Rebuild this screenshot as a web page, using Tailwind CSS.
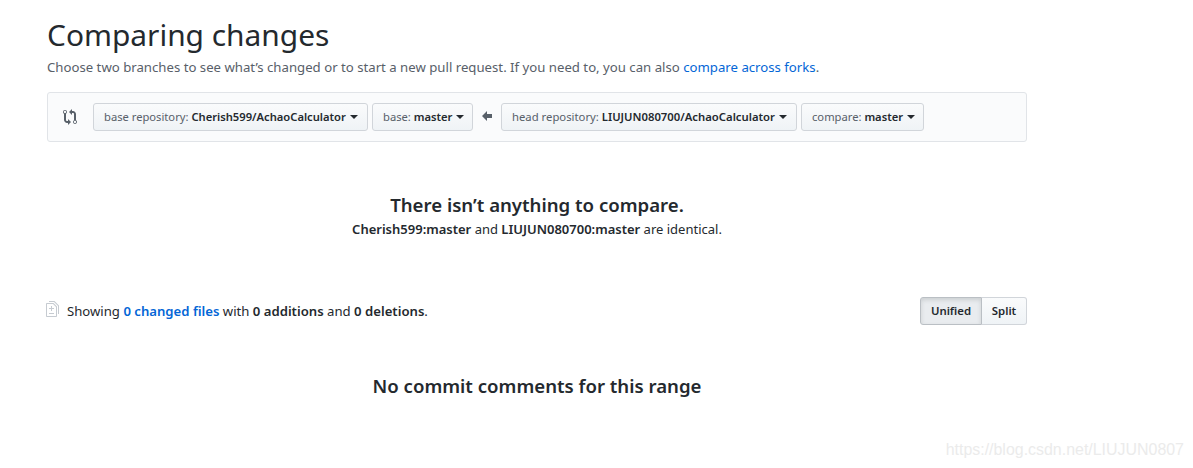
<!DOCTYPE html>
<html lang="en">
<head>
    <meta charset="UTF-8">
    <title>Comparing changes</title>
    <script src="https://cdn.jsdelivr.net/npm/@tailwindcss/browser@4"></script>
</head>
<body class="bg-white font-['Noto_Sans',sans-serif] text-[#24292e] w-[1193px] h-[468px] overflow-hidden relative">

    <div class="w-[980px] ml-[47px] pt-[16px]">
        <h1 class="text-[29.9px] leading-[38px] font-normal">Comparing changes</h1>
        <p class="text-[13.2px] leading-[20px] text-[#586069] mt-[3px]">Choose two branches to see what’s changed or to start a new pull request. If you need to, you can also <a class="text-[#0366d6]">compare across forks</a>.</p>

        <!-- range editor -->
        <div class="flex items-center h-[50px] mt-[15px] bg-[#fafbfc] border border-[#e1e4e8] rounded-[3px] pl-[15px]">
            <svg class="w-[14px] h-[16px] fill-[#586069] mr-[16px]" viewBox="0 0 14 16"><path d="M5 12H4c-.27-.02-.48-.11-.69-.31-.21-.2-.3-.42-.31-.69V4.72A1.993 1.993 0 0 0 2 1a1.993 1.993 0 0 0-1 3.72V11c.03.78.34 1.47.94 2.06.6.59 1.28.91 2.06.94h1v2l3-3-3-3v2zM2 1.8c.66 0 1.2.55 1.2 1.2 0 .65-.55 1.2-1.2 1.2C1.35 4.2.8 3.65.8 3c0-.65.55-1.2 1.2-1.2zm11 9.48V5c-.03-.78-.34-1.47-.94-2.06-.6-.59-1.28-.91-2.06-.94H9V0L6 3l3 3V4h1c.27.02.48.11.69.31.21.2.3.42.31.69v6.28A1.993 1.993 0 0 0 12 15a1.993 1.993 0 0 0 1-3.72zm-1 2.92c-.66 0-1.2-.55-1.2-1.2 0-.65.55-1.2 1.2-1.2.65 0 1.2.55 1.2 1.2 0 .65-.55 1.2-1.2 1.2z"/></svg>
            <button class="flex items-center h-[28px] w-[275px] px-[10px] text-[11.2px] text-[#586069] border border-[#d1d5da] rounded-[3px] bg-gradient-to-b from-[#fafbfc] to-[#eff3f6] whitespace-nowrap">base repository:&nbsp;<b class="font-semibold text-[#24292e]">Cherish599/AchaoCalculator</b><span class="ml-[4px] border-x-[4px] border-x-transparent border-t-[4px] border-t-[#24292e]"></span></button>
            <button class="flex items-center h-[28px] w-[101px] ml-[4px] px-[10px] text-[11.2px] text-[#586069] border border-[#d1d5da] rounded-[3px] bg-gradient-to-b from-[#fafbfc] to-[#eff3f6] whitespace-nowrap">base:&nbsp;<b class="font-semibold text-[#24292e]">master</b><span class="ml-[4px] border-x-[4px] border-x-transparent border-t-[4px] border-t-[#24292e]"></span></button>
            <svg class="w-[10px] h-[10px] fill-[#586069] mx-[9px] mb-[2px]" viewBox="0 0 10 10"><path d="M5 0 0 5l5 5V7h5V3H5z"/></svg>
            <button class="flex items-center h-[28px] w-[296px] px-[10px] text-[11.3px] text-[#586069] border border-[#d1d5da] rounded-[3px] bg-gradient-to-b from-[#fafbfc] to-[#eff3f6] whitespace-nowrap">head repository:&nbsp;<b class="font-semibold text-[#24292e]">LIUJUN080700/AchaoCalculator</b><span class="ml-[4px] border-x-[4px] border-x-transparent border-t-[4px] border-t-[#24292e]"></span></button>
            <button class="flex items-center h-[28px] w-[123px] ml-[4px] px-[10px] text-[11.2px] text-[#586069] border border-[#d1d5da] rounded-[3px] bg-gradient-to-b from-[#fafbfc] to-[#eff3f6] whitespace-nowrap">compare:&nbsp;<b class="font-semibold text-[#24292e]">master</b><span class="ml-[4px] border-x-[4px] border-x-transparent border-t-[4px] border-t-[#24292e]"></span></button>
        </div>

        <!-- blankslate -->
        <div class="text-center mt-[50px]">
            <h3 class="text-[18.6px] leading-[26px] font-semibold">There isn’t anything to compare.</h3>
            <p class="text-[13px] leading-[20px] mt-[1px]"><b class="font-semibold">Cherish599:master</b> and <b class="font-semibold">LIUJUN080700:master</b> are identical.</p>
        </div>

        <!-- diff toolbar -->
        <div class="flex items-center justify-between h-[28px] mt-[58px]">
            <div class="flex items-center text-[13.15px] pt-[2px]">
                <svg class="w-[14px] h-[16px] -ml-[1px] mr-[7px] mb-[6px] fill-[#c6cbd1]" viewBox="0 0 14 16"><path d="M6 7h2v1H6v2H5V8H3V7h2V5h1v2zm-3 6h5v-1H3v1zM7.5 2L11 5.5V15c0 .55-.45 1-1 1H1c-.55 0-1-.45-1-1V3c0-.55.45-1 1-1h6.5zM10 6L7 3H1v12h9V6zM8.5 0H3v1h5l4 4v8h1V4.5L8.5 0z"/></svg>
                <span>Showing <a class="text-[#0366d6] font-semibold">0 changed files</a> with <b class="font-semibold">0 additions</b> and <b class="font-semibold">0 deletions</b>.</span>
            </div>
            <div class="flex text-[11.4px] font-semibold h-[28px]">
                <div class="flex items-center justify-center w-[62px] border border-[#babfc4] rounded-l-[3px] bg-[#e9ecef] shadow-[inset_0_2px_4px_rgba(35,38,41,0.15)]">Unified</div>
                <div class="flex items-center justify-center w-[45px] border border-l-0 border-[#d1d5da] rounded-r-[3px] bg-gradient-to-b from-[#fafbfc] to-[#eff3f6]">Split</div>
            </div>
        </div>

        <h3 class="text-center text-[18.6px] leading-[26px] font-semibold mt-[48px]">No commit comments for this range</h3>
    </div>

    <!-- watermark -->
    <div class="absolute right-[9px] top-[439px] font-['Liberation_Sans',sans-serif] text-[15.95px] leading-[22px] text-[#ebebeb]">https://blog.csdn.net/LIUJUN0807</div>

</body>
</html>
